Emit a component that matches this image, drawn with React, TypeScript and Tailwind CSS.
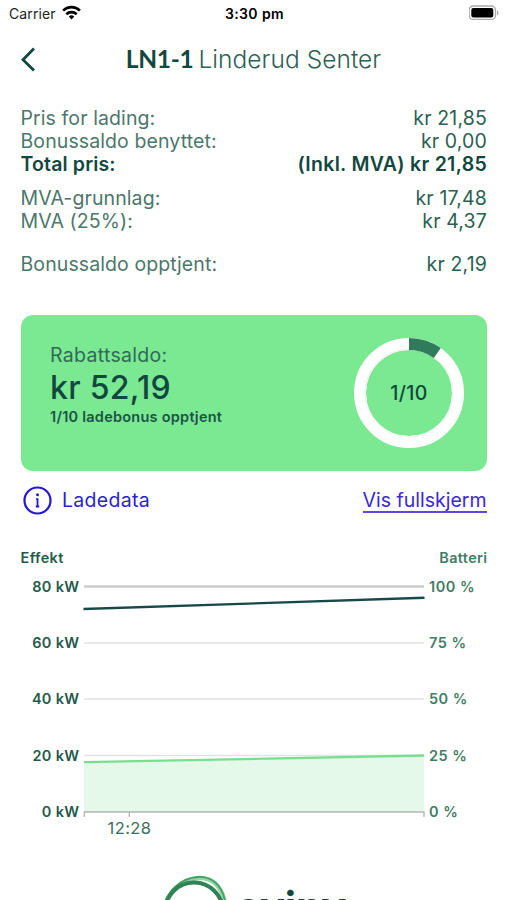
import React from 'react';

interface PriceRow {
  label: string;
  value: string;
  className?: string;
  bold?: boolean;
}

const PRICE_ROWS: PriceRow[] = [
  { label: 'Pris for lading:', value: 'kr 21,85' },
  { label: 'Bonussaldo benyttet:', value: 'kr 0,00' },
  { label: 'Total pris:', value: '(Inkl. MVA) kr 21,85', bold: true },
  { label: 'MVA-grunnlag:', value: 'kr 17,48', className: 'mt-2.5' },
  { label: 'MVA (25%):', value: 'kr 4,37' },
  { label: 'Bonussaldo opptjent:', value: 'kr 2,19', className: 'mt-5' },
];

const TICKS = [
  { y: 586.5, kw: '80 kW', percent: '100 %' },
  { y: 643, kw: '60 kW', percent: '75 %' },
  { y: 699, kw: '40 kW', percent: '50 %' },
  { y: 755.5, kw: '20 kW', percent: '25 %' },
  { y: 811.5, kw: '0 kW', percent: '0 %' },
];

function StatusBar() {
  return (
    <div className="grid h-7 grid-cols-3 items-center pl-[9px] pr-[7px] text-[14px] text-[#222]">
      <div className="-mt-0.5 flex items-center gap-1.5">
        <span className="tracking-[0.1px]">Carrier</span>
        <svg className="-mt-0.5" width="19" height="15" viewBox="0 0 19 15" fill="none" stroke="#000" strokeWidth="2.7">
          <path d="M1.1 5.6a12 12 0 0 1 16.8 0" />
          <path d="M4.3 9.2a7.6 7.6 0 0 1 10.4 0" />
          <path d="M9.5 14.4 6.8 11.6a4 4 0 0 1 5.4 0z" fill="#000" stroke="none" />
        </svg>
      </div>
      <span className="-mt-0.5 text-center font-semibold tracking-[0.4px] text-black">3:30 pm</span>
      <svg className="-mr-px -mt-0.5 justify-self-end" width="32" height="16" viewBox="0 0 32 16">
        <rect x="0.2" y="1" width="26.3" height="13.4" rx="4" fill="#fff" stroke="#aaa" strokeWidth="1.3" />
        <rect x="2.3" y="3" width="22" height="9.4" rx="2" fill="#000" />
        <path d="M28 5.4c2 .8 2 4 0 4.8z" fill="#aaa" />
      </svg>
    </div>
  );
}

function Header() {
  return (
    <header className="relative flex h-16 items-center justify-center">
      <svg className="absolute left-[20px] top-[19px]" width="16" height="26" viewBox="0 0 16 26" fill="none" stroke="#12473f" strokeWidth="2.8">
        <path d="M14 1.5 3 12.7 14 23.5" />
      </svg>
      <h1 className="-mt-px flex items-baseline gap-[5px] text-[24.5px] text-[#2c6155]">
        <span className="font-[Lato] font-bold tracking-[-0.3px] text-[#12473f]">LN1-1</span>
        <span className="font-light tracking-[0.05px]">Linderud Senter</span>
      </h1>
    </header>
  );
}

function PriceList() {
  return (
    <div className="mb-[39px] mt-[15px] pl-[20.5px] pr-5">
      {PRICE_ROWS.map((row) => (
        <div key={row.label} className={`flex h-[23.2px] items-center justify-between text-[19.5px] ${row.bold ? 'font-semibold text-[#12473f]' : 'text-[#2b5f53]'} ${row.className ?? ''}`}>
          <span className={row.bold ? 'tracking-[0.15px]' : 'tracking-[0.1px] text-[#4b776c]'}>{row.label}</span>
          <span className={row.bold ? 'tracking-[0.3px]' : 'tracking-[0.15px]'}>{row.value}</span>
        </div>
      ))}
    </div>
  );
}

function BonusRing() {
  return (
    <svg width="112" height="112" viewBox="0 0 112 112" fill="none">
      <circle cx="56" cy="56" r="49" stroke="#fff" strokeWidth="12" />
      <circle cx="56" cy="56" r="43.8" stroke="#f1f4f1" strokeWidth="1.5" />
      <path d="M56 7A49 49 0 0 1 84.3 16" stroke="#2f7b5c" strokeWidth="12" />
      <text x="56" y="62.5" textAnchor="middle" fontSize="19.5" fontWeight="500" letterSpacing="0.4" fill="#12473f">1/10</text>
    </svg>
  );
}

function BonusCard() {
  return (
    <section className="ml-[20.5px] mr-[20px] flex h-[156px] justify-between rounded-xl bg-[#7ae992] pl-[29.5px] pr-[22px]">
      <div className="flex flex-col pt-7">
        <span className="text-[19.5px] leading-6 tracking-[0.3px] text-[#2f6a58]">Rabattsaldo:</span>
        <span className="mt-[3px] text-[32px] font-medium leading-9 tracking-[0.3px] text-[#12473f]">kr 52,19</span>
        <span className="mt-px text-[14.5px] font-semibold leading-5 tracking-[0.25px] text-[#1b5347]">1/10 ladebonus opptjent</span>
      </div>
      <div className="pt-[22px]">
        <BonusRing />
      </div>
    </section>
  );
}

function ChartLinks() {
  return (
    <div className="mt-3 flex h-9 items-center justify-between pl-[23px] pr-[20.5px] text-[19.5px]">
      <button className="-mt-px flex items-center gap-2.5 text-[#2c1fd2]">
        <svg width="29" height="29" viewBox="0 0 29 29" fill="none" stroke="#2417d8" strokeWidth="2.2">
          <circle cx="14.5" cy="14.5" r="13" />
          <path d="M14.5 12.5V21M13.2 13h1.3M12.8 20.5h3.4" strokeWidth="1.8" />
          <circle cx="14.5" cy="8.8" r="1.5" fill="#2417d8" stroke="none" />
        </svg>
        <span className="tracking-[0.3px]">Ladedata</span>
      </button>
      <button className="border-b-2 border-[#5a48e0] leading-[21px] text-[#3c27d4]">Vis fullskjerm</button>
    </div>
  );
}

function ChargeChart() {
  return (
    <svg className="mt-5 block" width="507" height="310" viewBox="0 539 507 310" fill="none">
      <g fontSize="14.5" fontWeight="600" letterSpacing="0.35">
        <text x="20.5" y="562.5" fill="#245a4c">Effekt</text>
        <text x="487.5" y="562.5" textAnchor="end" fill="#3f7d66">Batteri</text>
      </g>
      {TICKS.map(({ y, kw, percent }, i) => (
        <g key={kw} fontSize="14.5" fontWeight="600" letterSpacing="0.3">
          <path d={`M84 ${y}H424`} stroke={i === 0 ? '#cbcbcb' : '#e2e2e2'} strokeWidth={i === 0 ? 2.5 : 1.5} />
          <text x="79.3" y={y + 5} textAnchor="end" fill="#245a4c">{kw}</text>
          <text x="429" y={y + 5} letterSpacing="0.5" fill="#3f7d66">{percent}</text>
        </g>
      ))}
      <path d="M84 762 424 755.5V811H84z" fill="#e4f9ea" />
      <path d="M84 762.2 424 755.5" stroke="#78df90" strokeWidth="2.3" />
      <path d="M83.5 609 424.5 597.8" stroke="#17494a" strokeWidth="2.4" />
      <path d="M84.3 817V812H424V817M129.3 812V817" stroke="#b3bab5" strokeWidth="1.4" />
      <text x="129.5" y="833.5" textAnchor="middle" fontSize="16.5" letterSpacing="0.4" fill="#3a6c60">12:28</text>
    </svg>
  );
}

function Logo() {
  return (
    <div className="mt-[25px] flex h-[80px] pl-[162px]">
      <svg width="68" height="68" viewBox="0 0 68 68" fill="none">
        <path d="M2.5 34C7 17 20 5 37 4c13-.5 22 8 25.5 23" stroke="#8fd8a5" strokeWidth="4.5" />
        <path d="M1.5 33C5 17 19 4 36 3c13-.5 24 7 27 24" stroke="#46a168" strokeWidth="1.8" />
        <ellipse cx="32" cy="37.5" rx="29" ry="29" stroke="#2f8354" strokeWidth="4" />
      </svg>
      <span className="ml-[6px] mt-[3px] text-[41.5px] font-bold leading-[60px] text-[#12473f]">eviny</span>
    </div>
  );
}

export default function App() {
  return (
    <main className="h-[900px] w-[507px] overflow-hidden bg-white font-[Inter,sans-serif]">
      <StatusBar />
      <Header />
      <PriceList />
      <BonusCard />
      <ChartLinks />
      <ChargeChart />
      <Logo />
    </main>
  );
}
